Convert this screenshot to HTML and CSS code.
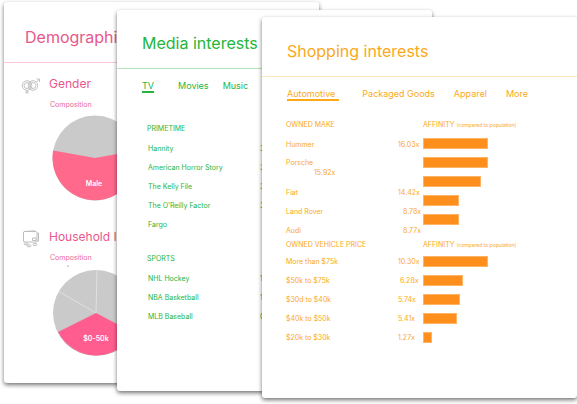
FILE: index.html
```html
<!DOCTYPE html>
<html lang="en">
<head>
<meta charset="utf-8">
<meta name="viewport" content="width=device-width, initial-scale=1">
<title>Audience insights</title>
<link rel="stylesheet" href="styles.css">
</head>
<body>
<main class="deck">
  <section class="card card-demographics">
    <header class="card-header"><h1>Demographics</h1></header>
    <article class="metric">
      <svg class="metric-icon" viewBox="0 0 20 18" aria-hidden="true">
        <g fill="none" stroke="#c2c2c2" stroke-width="1">
          <circle cx="6" cy="8.500" r="4.800"/><circle cx="6" cy="8.500" r="3"/>
          <circle cx="12" cy="8.500" r="4.800"/><circle cx="12" cy="8.500" r="3"/>
          <path d="M6 13v4M4 15h4M15.500 5l3-3M15.500 2h3v3"/>
        </g>
      </svg>
      <h2>Gender</h2>
      <p class="caption">Composition</p>
      <svg class="pie" viewBox="0 0 86 86" role="img" aria-label="Gender composition">
        <circle cx="43" cy="43" r="42.500" fill="#cacaca"/>
        <path d="M43 43L1.100 35.600A42.500 42.500 0 1 0 84.900 35.600Z" fill="#ff698c"/>
        <text x="42" y="71" text-anchor="middle">Male</text>
      </svg>
    </article>
    <article class="metric">
      <svg class="metric-icon" viewBox="0 0 20 18" aria-hidden="true">
        <g fill="none" stroke="#bebebe" stroke-width="1">
          <path d="M3 1.500L14 0.800V2M3 1.500Q2 2 2.500 3V11Q2.500 12 4 12H15Q16 12 16 11V2.500Q16 1.500 14 1.500H3"/>
          <path d="M16 3h1.500v8H16M11.500 8h3.500v2.500h-3.500z"/>
          <ellipse cx="5" cy="13.800" rx="2" ry="1"/><ellipse cx="8" cy="15.800" rx="2" ry="1"/><ellipse cx="14" cy="14.500" rx="2" ry="1.100"/>
        </g>
      </svg>
      <h2>Household Income</h2>
      <p class="caption">Composition</p>
      <svg class="pie pie-income" viewBox="0 0 86 86" role="img" aria-label="Household income composition">
        <circle cx="15" cy="-4" r="0.600" fill="#555"/>
        <circle cx="43" cy="43" r="43" fill="#cacaca"/>
        <path d="M43 43L44 0M43 43L6 21.500" stroke="#e0e0e0" fill="none"/>
        <path d="M43 43L5 62A43 43 0 0 0 81 63Z" fill="#ff5d90"/>
        <text x="43" y="71" text-anchor="middle">$0-50k</text>
      </svg>
    </article>
  </section>

  <section class="card card-media">
    <header class="card-header"><h1>Media interests</h1></header>
    <nav class="tabs">
      <a href="#tv" class="active">TV</a><a href="#movies">Movies</a><a href="#music">Music</a>
    </nav>
    <table class="shows">
      <caption>PRIMETIME</caption>
      <tr><th scope="row">Hannity</th><td>3.21x</td></tr>
      <tr><th scope="row">American Horror Story</th><td>3.10x</td></tr>
      <tr><th scope="row">The Kelly File</th><td>3.04x</td></tr>
      <tr><th scope="row">The O’Reilly Factor</th><td>3.01x</td></tr>
      <tr><th scope="row">Fargo</th><td></td></tr>
    </table>
    <table class="shows">
      <caption>SPORTS</caption>
      <tr><th scope="row">NHL Hockey</th><td>1.42x</td></tr>
      <tr><th scope="row">NBA Basketball</th><td>1.18x</td></tr>
      <tr><th scope="row">MLB Baseball</th><td>0.96x</td></tr>
    </table>
  </section>

  <section class="card card-shopping">
    <header class="card-header"><h1>Shopping interests</h1></header>
    <nav class="tabs">
      <a href="#automotive" class="active">Automotive</a><a href="#packaged">Packaged Goods</a><a href="#apparel">Apparel</a><a href="#more">More</a>
    </nav>
    <div class="affinity affinity-make">
      <table>
        <caption>OWNED MAKE</caption>
        <tr><th scope="row">Hummer</th><td>16.03x</td></tr>
        <tr class="wrapping"><th scope="row" colspan="2">Porsche</th></tr>
        <tr class="wrapped"><td colspan="2">15.92x</td></tr>
        <tr><th scope="row">Fiat</th><td>14.42x</td></tr>
        <tr><th scope="row">Land Rover</th><td class="short">8.78x</td></tr>
        <tr><th scope="row">Audi</th><td class="short">8.77x</td></tr>
      </table>
      <div class="chart">
        <h2>AFFINITY <small>(compared to population)</small></h2>
        <ul>
          <li><span style="width:65px"></span></li>
          <li><span style="width:65px"></span></li>
          <li><span style="width:58px"></span></li>
          <li><span style="width:36px"></span></li>
          <li><span style="width:36px"></span></li>
        </ul>
      </div>
    </div>
    <div class="affinity affinity-price">
      <table>
        <caption>OWNED VEHICLE PRICE</caption>
        <tr><th scope="row">More than $75k</th><td>10.30x</td></tr>
        <tr><th scope="row">$50k to $75k</th><td class="inset">6.28x</td></tr>
        <tr><th scope="row">$30d to $40k</th><td>5.74x</td></tr>
        <tr><th scope="row">$40k to $50k</th><td>5.41x</td></tr>
        <tr><th scope="row">$20k to $30k</th><td>1.27x</td></tr>
      </table>
      <div class="chart">
        <h2>AFFINITY <small>(compared to population)</small></h2>
        <ul>
          <li><span style="width:65px"></span></li>
          <li><span style="width:40px"></span></li>
          <li><span style="width:37px"></span></li>
          <li><span style="width:34px"></span></li>
          <li><span style="width:9px"></span></li>
        </ul>
      </div>
    </div>
  </section>
</main>
</body>
</html>
```
FILE: styles.css
```css
* { box-sizing: border-box; }

body {
  margin: 0;
  background: #fff;
  font-family: Inter, "Liberation Sans", sans-serif;
}

h1, h2, p, ul { margin: 0; padding: 0; font-weight: 400; }
ul { list-style: none; }

/* The cards share one row and overlap by spanning common columns. */
.deck {
  display: grid;
  grid-template-columns: 113fr 145fr 57fr 113fr 145fr;
  align-items: start;
  padding: 0 0 6px 4px;
}

.card {
  grid-row: 1;
  min-width: 0;
  overflow: hidden;
  background: #fff;
  border-radius: 3px;
  box-shadow: 0 2px 4px rgba(0, 0, 0, .55);
  color: var(--ink);
}

.card-demographics { --ink: #e8578a; --rule: #fdc9d8; grid-column: 1 / 4; margin-top: 2px; padding-bottom: 27px; }
.card-media { --ink: #25b53c; --rule: #b5e5bb; grid-column: 2 / 5; margin-top: 10px; padding-bottom: 65px; }
.card-shopping { --ink: #fba919; --rule: #ffe9bb; grid-column: 3 / 6; margin-top: 17px; padding-bottom: 51px; }

.card-header {
  padding: 24px 25px 15px;
  border-bottom: 1px solid var(--rule);
}
.card-demographics .card-header { padding: 25px 21px 15px; }
.card-media .card-header { padding-top: 23px; }

h1 { font-size: 16px; line-height: 20px; white-space: nowrap; }

/* Demographics */
.metric {
  display: grid;
  grid-template-columns: 20px 1fr;
  column-gap: 8px;
  padding: 11px 0 0 17px;
}
.metric + .metric { padding-top: 26px; }
.metric-icon { width: 20px; height: 18px; margin-top: 3px; }
.metric h2 { font-size: 12px; line-height: 20px; white-space: nowrap; }
.caption { grid-column: 2; margin-top: 2px; font-size: 7px; line-height: 16px; padding-left: 1px; opacity: .9; }
.pie { grid-column: 2; width: 86px; height: 86px; margin: 2px 0 0 3px; overflow: visible; }
.pie-income { margin: 4px 0 0 4px; }
.pie text { fill: #fff; font-size: 7px; font-weight: 600; }

/* Tabs */
.tabs { display: flex; padding: 11px 25px 0; }
.tabs a {
  color: inherit;
  font-size: 9px;
  line-height: 11px;
  text-decoration: none;
  white-space: nowrap;
  border-bottom: 2px solid transparent;
}
.tabs .active { border-color: var(--ink); }
.card-media .tabs { gap: 14px; }
.card-media .active { margin-right: 10px; }
.card-shopping .tabs { gap: 19px; }
.card-shopping .active { padding-right: 4px; margin-right: 4px; }

/* Tables */
table { border-collapse: collapse; table-layout: fixed; }
caption { text-align: left; font-size: 7px; line-height: 10px; white-space: nowrap; }
th, td {
  padding: 0;
  height: 19px;
  font-size: 7px;
  line-height: 10px;
  font-weight: 400;
  text-align: left;
  white-space: nowrap;
}

.shows { width: 100%; margin: 31px 0 0 30px; }
.shows caption { padding-bottom: 5px; }
.shows + .shows { margin-top: 20px; }
.shows th { width: 113px; padding-left: 1px; }

/* Affinity */
.affinity { display: flex; padding-left: 24px; }
.affinity-make { padding-top: 19px; }
.affinity table { width: 137px; }
.affinity th { width: 112px; }
.affinity caption { padding-bottom: 5px; }
.affinity-price caption { padding-bottom: 2px; }
.affinity .wrapping th { height: 14px; vertical-align: bottom; }
.affinity .wrapped td { height: 15px; padding-left: 28px; vertical-align: top; }
.affinity .short { padding-left: 5px; }
.affinity .inset { padding-left: 2px; }

.chart h2 { font-size: 7px; line-height: 10px; white-space: nowrap; }
.chart small { font-size: 5px; }
.chart ul { padding-top: 4px; }
.affinity-price ul { padding-top: 2px; }
.chart li { display: flex; align-items: center; height: 19px; }
.chart span { height: 11px; background: #ff8f1c; border: 1px solid #ffb466; }
```
